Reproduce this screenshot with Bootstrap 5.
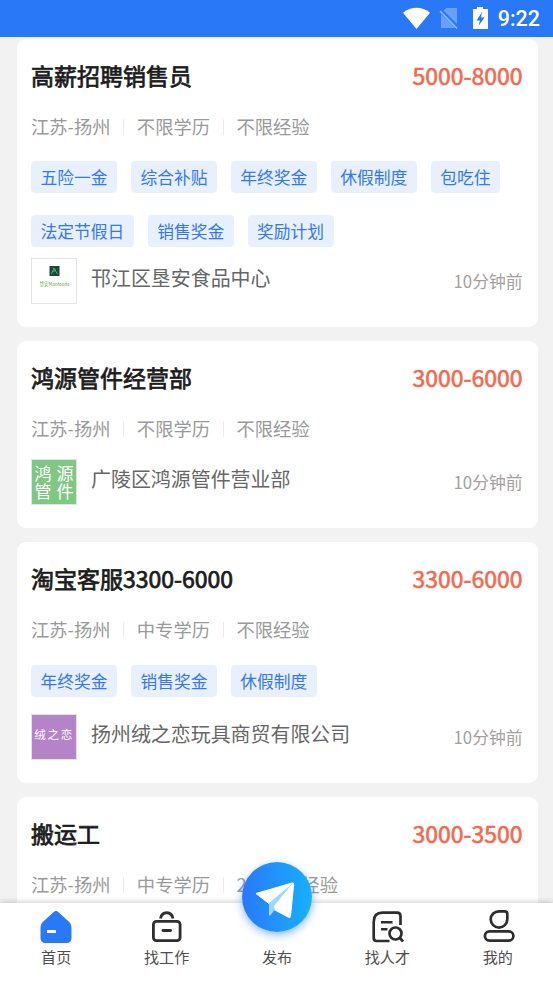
<!DOCTYPE html>
<html lang="zh-CN">
<head>
<meta charset="utf-8">
<meta name="viewport" content="width=device-width, initial-scale=1">
<title>招聘</title>
<link href="https://cdn.jsdelivr.net/npm/bootstrap@5.3.0/dist/css/bootstrap.min.css" rel="stylesheet">
<style>
body{font-family:"Noto Sans CJK SC",sans-serif;background:#f2f2f2;width:553px;height:983px;white-space:nowrap}
.statusbar{height:37px;background:#2878f8;font:500 21.5px/38px Roboto,sans-serif;padding-right:13px}
.joblist{padding:1.5px 15px 0 17px;gap:14px}
.job{border-radius:9px;padding:19px 15.5px 22.8px 14px}
.job-title,.pay{font-size:23px;line-height:34px;color:#1c1c1c;-webkit-text-stroke:.75px currentColor}
.pay{color:#f2694f;-webkit-text-stroke-width:.6px}
.meta{margin-top:21px;height:26px;line-height:26px;font-size:18.3px;color:#999}
.meta span+span{margin-left:13px;padding-left:13.4px;position:relative}
.meta span+span::before{content:"";position:absolute;left:0;top:6px;height:16px;width:1px;background:#ebebeb}
.tags{margin-top:22.5px;gap:22px 13.9px}
.tag{height:32px;line-height:33px;padding:0 9.5px;font-size:16.75px;color:#3478f0;background:#e8f0fe;border-radius:4px}
.firm{margin-top:17.7px;height:46px}
.meta+.firm{margin-top:18.7px}
.firm-tight{margin-top:11px}
.firm-name{font-size:19.95px;line-height:30px;margin-left:14px;margin-top:5px;color:#666}
.ago{font-size:16.8px;line-height:26px;margin-top:10px;color:#a5a0a0}
.logo{width:46px;height:46px;border:1px solid #e4e4e4;flex:none}
.logo svg,.tab svg,.statusbar svg,.send svg{display:block}
.tabs{height:80px;padding-left:1px;box-shadow:0 -1px 6px rgba(0,0,0,.2);font-size:15.1px;color:#4d4d4d}
.tab{width:20%;padding-top:6px}
.tab-label{line-height:20px;margin-top:.5px}
.send{width:70px;height:70px;left:242px;top:-41px;background:linear-gradient(90deg,#2a78fa,#16b0fe);box-shadow:0 3px 8px rgba(40,130,250,.55)}
</style>
</head>
<body class="overflow-hidden position-relative">
<header class="statusbar d-flex justify-content-end align-items-center text-white">
<svg width="98" height="37" viewBox="0 0 98 37"><path d="M3 12.800C11 6.200 22 6.200 30 12.800L16.500 29Z" fill="#fff"/><path d="M46 8H57V28H41V13Z" fill="#fff" opacity=".3"/><path d="M40 10L58 28" stroke="#2878f8" stroke-width="4"/><path d="M40 11L57 28.500" stroke="#b5cff9" stroke-width="1.600" opacity=".8"/><path d="M77 7h6v2h5v20H73V9h4Z" fill="#fff"/><path d="M82 12L76.500 20.500H80L78.500 26L84.500 17.500H81Z" fill="#2878f8"/></svg>
<span>9:22</span>
</header>
<main class="joblist d-flex flex-column">
<article class="job bg-white">
<div class="d-flex justify-content-between"><div class="job-title">高薪招聘销售员</div><div class="pay">5000-8000</div></div>
<div class="meta d-flex"><span>江苏-扬州</span><span>不限学历</span><span>不限经验</span></div>
<div class="tags d-flex flex-wrap"><span class="tag">五险一金</span><span class="tag">综合补贴</span><span class="tag">年终奖金</span><span class="tag">休假制度</span><span class="tag">包吃住</span><span class="tag">法定节假日</span><span class="tag">销售奖金</span><span class="tag">奖励计划</span></div>
<div class="firm firm-tight d-flex"><div class="logo"><svg width="44" height="44" viewBox="0 0 44 44"><rect x="17.500" y="7" width="10" height="10" fill="#174c35"/><path d="M19.500 15L22 9L23.500 12L25.500 15M20 13L24 11" fill="none" stroke="#7fb592" stroke-width=".8"/><text x="7.500" y="27" font-size="5.200" textLength="30" lengthAdjust="spacingAndGlyphs" fill="#5fac4b">垦安Manfoods</text></svg></div><div class="firm-name">邗江区垦安食品中心</div><div class="ago ms-auto">10分钟前</div></div>
</article>
<article class="job bg-white">
<div class="d-flex justify-content-between"><div class="job-title">鸿源管件经营部</div><div class="pay">3000-6000</div></div>
<div class="meta d-flex"><span>江苏-扬州</span><span>不限学历</span><span>不限经验</span></div>
<div class="firm d-flex"><div class="logo"><svg width="44" height="44" viewBox="0 0 44 44"><rect width="44" height="44" fill="#81c784"/><g font-size="17" fill="#fff"><text x="2.500" y="20">鸿</text><text x="24.500" y="20">源</text><text x="2.500" y="37.500">管</text><text x="24.500" y="37.500">件</text></g></svg></div><div class="firm-name">广陵区鸿源管件营业部</div><div class="ago ms-auto">10分钟前</div></div>
</article>
<article class="job bg-white">
<div class="d-flex justify-content-between"><div class="job-title">淘宝客服3300-6000</div><div class="pay">3300-6000</div></div>
<div class="meta d-flex"><span>江苏-扬州</span><span>中专学历</span><span>不限经验</span></div>
<div class="tags d-flex flex-wrap"><span class="tag">年终奖金</span><span class="tag">销售奖金</span><span class="tag">休假制度</span></div>
<div class="firm d-flex"><div class="logo"><svg width="44" height="44" viewBox="0 0 44 44"><rect width="44" height="44" fill="#b583c8"/><text x="2.200" y="24" font-size="11.500" letter-spacing="1.800" fill="#fff">绒之恋</text></svg></div><div class="firm-name">扬州绒之恋玩具商贸有限公司</div><div class="ago ms-auto">10分钟前</div></div>
</article>
<article class="job bg-white">
<div class="d-flex justify-content-between"><div class="job-title">搬运工</div><div class="pay">3000-3500</div></div>
<div class="meta d-flex"><span>江苏-扬州</span><span>中专学历</span><span>2年以上经验</span></div>
<div class="firm"></div>
</article>
</main>
<nav class="tabs bg-white position-absolute bottom-0 start-0 w-100 d-flex">
<div class="tab d-flex flex-column align-items-center"><svg width="36" height="36" viewBox="0 0 36 36"><path d="M15.500 3.200Q18 .8 20.500 3.200L31.500 13.200Q33.500 15 33.500 18V29Q33.500 34 28.500 34H7.500Q2.500 34 2.500 29V18Q2.500 15 4.500 13.200Z" fill="#2878f8"/><rect x="9" y="21" width="9" height="3" rx=".5" fill="#fff"/></svg><div class="tab-label">首页</div></div>
<div class="tab d-flex flex-column align-items-center"><svg width="36" height="36" viewBox="0 0 36 36" fill="none" stroke="#2e2e2e" stroke-width="2.800"><rect x="4.400" y="12.400" width="26.700" height="19.200" rx="3"/><path d="M11.500 9.500C13 1.800 22.500 1.800 24 9.500"/><path d="M14 21.500h7.500" stroke-linecap="round"/></svg><div class="tab-label">找工作</div></div>
<div class="tab d-flex flex-column align-items-center"><svg width="36" height="36"></svg><div class="tab-label">发布</div></div>
<div class="tab d-flex flex-column align-items-center"><svg width="36" height="36" viewBox="0 0 36 36" fill="none" stroke="#2e2e2e" stroke-width="2.700"><path d="M20.500 32H7.500Q4.700 32 4.700 28.500V13Q4.700 3.700 13.500 3.700H28Q31.500 3.700 31.500 7.200V16"/><path d="M12 13.200h11.500M12 20.300h6.500" stroke-width="2.500"/><circle cx="26.500" cy="24.500" r="6"/><path d="M30.500 28.500L34 32.500"/></svg><div class="tab-label">找人才</div></div>
<div class="tab d-flex flex-column align-items-center"><svg width="36" height="36" viewBox="0 0 36 36" fill="none" stroke="#2e2e2e" stroke-width="2.700"><path d="M19 2.300H24.500Q27.300 2.300 27.300 5.100V10.300A8.300 8.300 0 0 1 10.700 10.300A8.200 8.200 0 0 1 19 2.300Z"/><rect x="4.900" y="22.400" width="28.500" height="9.300" rx="4.600"/></svg><div class="tab-label">我的</div></div>
<div class="send rounded-circle position-absolute"><svg width="70" height="70" viewBox="0 0 70 70"><path d="M14 31.500L50 21Q52 20.500 51.700 22.500L48.500 54.500Q48 56.500 46.500 55.300L32 47.500L27.500 42Z" fill="#fff" stroke="#fff" stroke-width="1" stroke-linejoin="round"/><path d="M50.500 21.500L27 41V53Q27.500 54.500 29 52.500L33 47.500L32 44Z" fill="#9cdafb"/></svg></div>
</nav>
<script src="https://cdn.jsdelivr.net/npm/bootstrap@5.3.0/dist/js/bootstrap.bundle.min.js"></script>
</body>
</html>
